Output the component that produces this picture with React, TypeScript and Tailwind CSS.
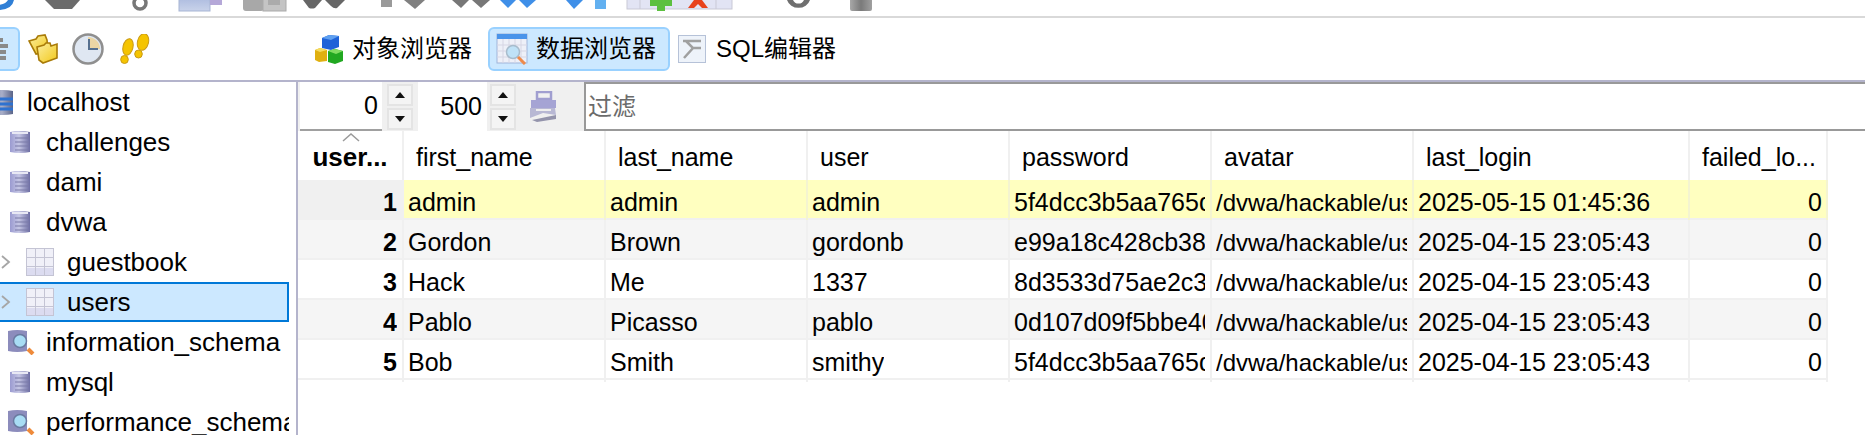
import React from "react";

const uiFont = "font-['Liberation_Sans','Noto_Sans_CJK_SC',sans-serif]";

function TopStrip() {
  return (
    <svg width="880" height="16" viewBox="0 0 880 16" className="block">
      <defs>
        <linearGradient id="tsMon" x1="0" y1="0" x2="0" y2="1">
          <stop offset="0" stopColor="#a9b8de" />
          <stop offset="1" stopColor="#c9d3ea" />
        </linearGradient>
        <linearGradient id="tsSq" x1="0" y1="0" x2="1" y2="0">
          <stop offset="0" stopColor="#a8a8a8" />
          <stop offset="0.5" stopColor="#7a7a7a" />
          <stop offset="1" stopColor="#a0a0a0" />
        </linearGradient>
      </defs>
      <path d="M-2 10 Q12 10 14 0 H8 Q6 4 -2 5 Z" fill="#2f7fd6" />
      <path d="M45 0 H80 L72 9 H54 Z" fill="#6b6b6b" />
      <circle cx="140" cy="3" r="6" fill="none" stroke="#777" strokeWidth="3.5" />
      <rect x="179" y="-4" width="31" height="15" fill="url(#tsMon)" stroke="#a7b5d4" />
      <rect x="210" y="-4" width="12" height="9" fill="#b5a8d8" />
      <rect x="243" y="-4" width="21" height="15" rx="3" fill="#a8a8a8" />
      <rect x="263" y="-4" width="23" height="15" fill="#c4c4c4" stroke="#aaa" />
      <rect x="268" y="-4" width="12" height="9" fill="#ababab" />
      <path d="M303 0 H322 L315 8 Q312 9 309 8 Z M325 0 H345 L337 8 Q334 9 331 6 Z" fill="#666" />
      <rect x="381" y="-2" width="11" height="9" fill="#9a9a9a" />
      <path d="M404 0 H425 L415 9 Z" fill="#808080" />
      <path d="M452 0 H469 L461 8 Z M472 0 H490 L481 8 Z" fill="#777" />
      <path d="M500 0 H516 L508 8 Z M519 0 H536 L527 8 Z" fill="#3f8fe8" />
      <path d="M566 0 H583 L574 9 Z" fill="#3f8fe8" />
      <rect x="595" y="-2" width="11" height="11" fill="#62b0f0" />
      <rect x="627" y="-4" width="105" height="13" fill="#e2e4f4" stroke="#c9c9d6" />
      <path d="M640 -2 V9 M716 -2 V9" stroke="#c9c9d6" />
      <path d="M650 0 H672 V6 H665 V11 H657 V6 H650 Z" fill="#5cc040" />
      <path d="M688 8 L694 0 H702 L708 8 H702 L698 4 L694 8 Z" fill="#e8421c" />
      <path d="M787 0 A12 11 0 0 0 810 0 H804 A6 6 0 0 1 793 0 Z" fill="#6f6f6f" />
      <rect x="850" y="-2" width="22" height="13" rx="2" fill="url(#tsSq)" />
    </svg>
  );
}

function FoldersIcon() {
  return (
    <svg width="30" height="30" viewBox="0 0 30 30">
      <defs>
        <linearGradient id="fold" x1="0" y1="0" x2="1" y2="1">
          <stop offset="0" stopColor="#fbeea0" />
          <stop offset="1" stopColor="#f2c818" />
        </linearGradient>
      </defs>
      <path d="M1 7 L8 5 L10 2 L17 1 L19 6 L20 18 L8 20 Z" fill="url(#fold)" stroke="#a97b08" strokeWidth="1.6" />
      <path d="M9 13 L16 11 L18 9 L22 9 L23 12 L29 10 V24 L15 29 L11 26 Z" fill="url(#fold)" stroke="#a97b08" strokeWidth="1.6" />
    </svg>
  );
}

function ClockIcon() {
  return (
    <svg width="32" height="32" viewBox="0 0 32 32">
      <circle cx="16" cy="16" r="14.5" fill="#dfe7f2" stroke="#8f8f8f" strokeWidth="2.5" />
      <path d="M16 16 V4 A12 12 0 0 1 28 16 Z" fill="#ecd6a4" />
      <path d="M17 6 V16 H26" fill="none" stroke="#56708f" strokeWidth="2" />
    </svg>
  );
}

function StepsIcon() {
  return (
    <svg width="30" height="30" viewBox="0 0 30 30">
      <ellipse cx="8" cy="13" rx="5" ry="8.5" transform="rotate(14 8 13)" fill="#f5c400" stroke="#c99a16" />
      <ellipse cx="4.5" cy="25.5" rx="3.8" ry="4" fill="#f5c400" stroke="#c99a16" />
      <ellipse cx="23" cy="8" rx="5.5" ry="8.5" transform="rotate(14 23 8)" fill="#f5c400" stroke="#c99a16" />
      <ellipse cx="18.5" cy="20" rx="3.8" ry="4" fill="#f5c400" stroke="#c99a16" />
    </svg>
  );
}

function CubesIcon() {
  return (
    <svg width="30" height="30" viewBox="0 0 30 30">
      <path d="M8 4 L15 1 L25 2 V13 L17 16 L8 14 Z" fill="#1f62d8" />
      <path d="M8 4 L17 6 L25 2 L15 1 Z" fill="#5fa0f0" />
      <path d="M1 16 L6 14 L13 16 V27 L5 28 L1 26 Z" fill="#e0b010" />
      <path d="M1 16 L6 18 L13 16 L6 14 Z" fill="#f5dc60" />
      <path d="M14 17 L21 15 L29 17 V27 L21 30 L14 28 Z" fill="#21a821" />
      <path d="M14 17 L22 20 L29 17 L21 15 Z" fill="#7fdc60" />
    </svg>
  );
}

function DataIcon() {
  return (
    <svg width="32" height="32" viewBox="0 0 32 32">
      <rect x="1" y="1" width="30" height="29" fill="#eef0f8" stroke="#9fb4da" />
      <rect x="1" y="1" width="30" height="5" fill="#4a94ea" />
      <path d="M1 12 H31 M1 18 H31 M1 24 H31 M7 6 V30 M13 6 V30 M19 6 V30 M25 6 V30" stroke="#d6d6e4" />
      <circle cx="17" cy="19" r="6.5" fill="#bfe2f7" stroke="#a8bccc" strokeWidth="1.5" />
      <path d="M22 24 L29 31" stroke="#ee8a4a" strokeWidth="3" />
    </svg>
  );
}

function SqlIcon() {
  return (
    <svg width="28" height="28" viewBox="0 0 28 28">
      <rect x="0.5" y="0.5" width="27" height="27" fill="#eef3fa" stroke="#b6c2d8" />
      <path d="M5 6 H23 M8 6 L15 13 L6 23 M14 13 H23" fill="none" stroke="#a0a0a0" strokeWidth="2.5" />
    </svg>
  );
}

function DbIcon({ id, blue }: { id: string; blue?: boolean }) {
  const stops = blue
    ? ["#8f96b4", "#a8aec8", "#5a6488"]
    : ["#9a9ad0", "#c5c6e4", "#6e6ea4"];
  return (
    <svg width="20" height={blue ? 27 : 24} viewBox={blue ? "0 0 20 27" : "0 0 20 24"}>
      <defs>
        <linearGradient id={id} x1="0" y1="0" x2="1" y2="0">
          <stop offset="0" stopColor={stops[0]} />
          <stop offset="0.45" stopColor={stops[1]} />
          <stop offset="1" stopColor={stops[2]} />
        </linearGradient>
      </defs>
      {blue ? (
        <>
          <path d="M0 2 Q10 0 20 2 V25 Q10 27 0 25 Z" fill={`url(#${id})`} />
          <path d="M0 10 H20 M0 15 H20 M0 20 H20" stroke="#2f72d0" strokeWidth="3" />
        </>
      ) : (
        <>
          <path d="M0 2 Q10 0 20 2 V22 Q10 24 0 22 Z" fill={`url(#${id})`} />
          <path d="M2 3 H18" stroke="#e8e8f4" strokeWidth="2" />
          <path d="M5 8 H19 M5 12 H19 M5 16 H19 M5 20 H19" stroke="#7a7aa8" strokeWidth="1.2" />
        </>
      )}
    </svg>
  );
}

function QueryDbIcon() {
  return (
    <svg width="27" height="26" viewBox="0 0 27 26">
      <path d="M0 2 Q9 0 19 2 V22 Q9 24 0 22 Z" fill="#8c8cbc" />
      <circle cx="12" cy="12" r="6.5" fill="#a8dcf4" stroke="#6a7aa0" strokeWidth="1.5" />
      <path d="M20 20 L25 25" stroke="#ee8a3a" strokeWidth="4" />
    </svg>
  );
}

function TableIcon() {
  return (
    <svg width="28" height="28" viewBox="0 0 28 28">
      <rect x="0.5" y="0.5" width="27" height="27" fill="#f0f0f8" stroke="#c4c4d4" />
      <rect x="1" y="20" width="26" height="7" fill="#dcdcf0" />
      <path d="M0 9.5 H28 M0 18.5 H28 M9.5 0 V28 M18.5 0 V28" stroke="#c4c4d4" />
    </svg>
  );
}

function Chevron() {
  return (
    <svg width="10" height="14" viewBox="0 0 10 14">
      <path d="M1 1 L8 7 L1 13" fill="none" stroke="#a6a6a6" strokeWidth="1.8" />
    </svg>
  );
}

function FilterToolIcon() {
  return (
    <svg width="28" height="32" viewBox="0 0 28 32">
      <path d="M8 1 H22 V8 H8 Z" fill="none" stroke="#a09ed0" strokeWidth="2.5" />
      <path d="M2 9 H27 V17 H2 Z" fill="#a5a4d4" />
      <path d="M1 17 H26 L27 24 L14 22 L1 27 Z" fill="#b8b8d4" />
      <path d="M3 29 L27 24 V28 L8 31 Z" fill="#9494ac" />
      <path d="M7 19 H22" stroke="#eee" strokeWidth="2" />
    </svg>
  );
}

function Spin() {
  const b = "flex h-[22px] items-center justify-center border-2 border-[#e4e4e4] bg-[#f4f4f4]";
  return (
    <div className="flex w-[26px] flex-col gap-[2px]">
      <div className={b}>
        <svg width="10" height="6" viewBox="0 0 10 6"><path d="M0 6 L5 0 L10 6 Z" fill="#111" /></svg>
      </div>
      <div className={b}>
        <svg width="10" height="6" viewBox="0 0 10 6"><path d="M0 0 L5 6 L10 0 Z" fill="#111" /></svg>
      </div>
    </div>
  );
}

const treeRows = [
  { name: "challenges", icon: "db" },
  { name: "dami", icon: "db" },
  { name: "dvwa", icon: "db" },
  { name: "guestbook", icon: "table" },
  { name: "users", icon: "table", selected: true },
  { name: "information_schema", icon: "query" },
  { name: "mysql", icon: "db" },
  { name: "performance_schema", icon: "query" },
];

function TreeRow({ row, i }: { row: (typeof treeRows)[number]; i: number }) {
  if (row.icon === "table") {
    return (
      <div
        className={
          row.selected
            ? "flex h-10 w-[289px] shrink-0 items-center overflow-hidden border-y-2 border-r-2 border-[#0078d7] bg-[#cce8ff]"
            : "flex h-10 w-[289px] shrink-0 items-center overflow-hidden"
        }
      >
        <div className="ml-[1px] flex w-[25px] shrink-0"><Chevron /></div>
        <TableIcon />
        <span className="ml-[13px] whitespace-nowrap">{row.name}</span>
      </div>
    );
  }
  return (
    <div className="flex h-10 w-[289px] shrink-0 items-center overflow-hidden">
      {row.icon === "db" ? (
        <div className="ml-[10px] flex w-9 shrink-0"><DbIcon id={`db${i}`} /></div>
      ) : (
        <div className="ml-[8px] flex w-[38px] shrink-0"><QueryDbIcon /></div>
      )}
      <span className="whitespace-nowrap">{row.name}</span>
    </div>
  );
}

const rows = [
  ["1", "admin", "admin", "admin", "5f4dcc3b5aa765d61d8327deb882cf99", "/dvwa/hackable/users/admin.jpg", "2025-05-15 01:45:36", "0"],
  ["2", "Gordon", "Brown", "gordonb", "e99a18c428cb38d5f260853678922e03", "/dvwa/hackable/users/gordonb.jpg", "2025-04-15 23:05:43", "0"],
  ["3", "Hack", "Me", "1337", "8d3533d75ae2c3966d7e0d4fcc69216b", "/dvwa/hackable/users/1337.jpg", "2025-04-15 23:05:43", "0"],
  ["4", "Pablo", "Picasso", "pablo", "0d107d09f5bbe40cade3de5c71e9e9b7", "/dvwa/hackable/users/pablo.bmp", "2025-04-15 23:05:43", "0"],
  ["5", "Bob", "Smith", "smithy", "5f4dcc3b5aa765d61d8327deb882cf99", "/dvwa/hackable/users/smithy.jpg", "2025-04-15 23:05:43", "0"],
];

const headers = ["first_name", "last_name", "user", "password", "avatar", "last_login", "failed_lo..."];
const colsClass = "grid w-[1530px] grid-cols-[106px_202px_202px_202px_202px_202px_276px_138px]";

export default function App() {
  return (
    <div className={`flex h-[435px] w-[1865px] flex-col overflow-hidden bg-white text-black ${uiFont}`}>
      <div className="h-4 shrink-0 overflow-hidden"><TopStrip /></div>
      <div className="h-[2px] shrink-0 bg-[#d9d9d9]" />

      <div className="flex h-[62px] shrink-0 items-center">
        <div className="flex h-11 w-5 shrink-0 flex-col items-start justify-center gap-[2px] rounded-r-md border-y-2 border-r-2 border-[#99d1ff] bg-[#cce8ff]">
          <div className="h-[4px] w-[3px] bg-[#8a8a8a]" />
          <div className="h-[4px] w-2 bg-[#8a8a8a]" />
          <div className="h-[4px] w-[6px] bg-[#8a8a8a]" />
          <div className="h-[4px] w-[6px] bg-[#8a8a8a]" />
        </div>
        <div className="ml-[8px]"><FoldersIcon /></div>
        <div className="ml-[14px]"><ClockIcon /></div>
        <div className="ml-[16px]"><StepsIcon /></div>
        <div className="ml-[164px] flex items-center gap-[8px] pr-[8px] text-2xl">
          <CubesIcon />
          <span className="w-[120px] whitespace-nowrap">对象浏览器</span>
        </div>
        <div className="ml-[8px] flex h-11 w-[182px] items-center gap-[8px] rounded-md border-2 border-[#99d1ff] bg-[#cce8ff] pl-[6px] text-2xl">
          <DataIcon />
          <span className="whitespace-nowrap">数据浏览器</span>
        </div>
        <div className="ml-[8px] flex items-center gap-[10px] text-2xl">
          <SqlIcon />
          <span className="whitespace-nowrap">SQL编辑器</span>
        </div>
      </div>

      <div className="flex min-h-0 flex-1 border-t-2 border-[#b4b4cc]">
        <div className="flex w-[298px] shrink-0 flex-col overflow-hidden border-r-2 border-[#b4b4cc] text-[26px]">
          <div className="flex h-10 shrink-0 items-center overflow-hidden">
            <div className="ml-[-7px] flex w-[34px] shrink-0"><DbIcon id="dbHost" blue /></div>
            <span>localhost</span>
          </div>
          {treeRows.map((r, i) => (
            <TreeRow key={r.name} row={r} i={i} />
          ))}
        </div>

        <div className="flex min-w-0 flex-1 flex-col text-[25px]">
          <div className="flex h-[49px] shrink-0 items-stretch bg-[#f0f0f0]">
            <div className="ml-[2px] flex w-[82px] items-center justify-end border-b-2 border-[#a0a0a0] bg-white pr-[4px]">0</div>
            <div className="ml-[5px] flex items-center"><Spin /></div>
            <div className="ml-[5px] flex w-[69px] items-center justify-end bg-white pr-[5px]">500</div>
            <div className="ml-[3px] flex items-center"><Spin /></div>
            <div className="ml-[13px] flex items-center"><FilterToolIcon /></div>
            <div className="ml-[27px] flex min-w-0 flex-1 items-center border-b-2 border-l-2 border-t-2 border-[#999] bg-white pl-[2px] text-2xl text-[#6b6b6b]">过滤</div>
          </div>

          <div className={`${colsClass} h-[49px] shrink-0`}>
            <div className="relative flex items-center justify-center border-r-2 border-[#f0f0f0] pt-1 text-[26px] font-bold">
              <svg width="18" height="9" viewBox="0 0 18 9" className="absolute left-[44px] top-[2px]">
                <path d="M1 8 L9 1 L17 8" fill="none" stroke="#9a9a9a" strokeWidth="1.5" />
              </svg>
              user...
            </div>
            {headers.map((h) => (
              <div key={h} className="flex items-center overflow-hidden whitespace-nowrap border-r-2 border-[#f0f0f0] pl-3 pt-1">
                {h}
              </div>
            ))}
          </div>

          {rows.map((row, r) => (
            <div
              key={row[0]}
              className={
                r === 0
                  ? `${colsClass} h-10 shrink-0 border-b-2 border-[#f0f0f0] bg-[#ffffc0]`
                  : r % 2 === 1
                    ? `${colsClass} h-10 shrink-0 border-b-2 border-[#f0f0f0] bg-[#f5f5f5]`
                    : `${colsClass} h-10 shrink-0 border-b-2 border-[#f0f0f0] bg-white`
              }
            >
              {row.map((cell, c) => (
                <div
                  key={c}
                  className={
                    c === 0
                      ? r === 0
                        ? "flex items-center justify-end border-r-2 border-[#f0f0f0] bg-[#f0f0f0] pr-[5px] pt-1 font-bold"
                        : "flex items-center justify-end border-r-2 border-[#f0f0f0] pr-[5px] pt-1 font-bold"
                      : c === 7
                        ? r === 0
                          ? "flex items-center justify-end border-r-2 border-[#f4f4d0] pr-[4px] pt-1"
                          : "flex items-center justify-end border-r-2 border-[#f0f0f0] pr-[4px] pt-1"
                        : r === 0
                          ? "flex min-w-0 items-center border-r-2 border-[#f4f4d0] pl-1 pr-[5px] pt-1"
                          : "flex min-w-0 items-center border-r-2 border-[#f0f0f0] pl-1 pr-[5px] pt-1"
                  }
                >
                  <span
                    className={
                      c === 5
                        ? "block min-w-0 overflow-hidden whitespace-nowrap text-2xl"
                        : "block min-w-0 overflow-hidden whitespace-nowrap"
                    }
                  >
                    {cell}
                  </span>
                </div>
              ))}
            </div>
          ))}
        </div>
      </div>
    </div>
  );
}
